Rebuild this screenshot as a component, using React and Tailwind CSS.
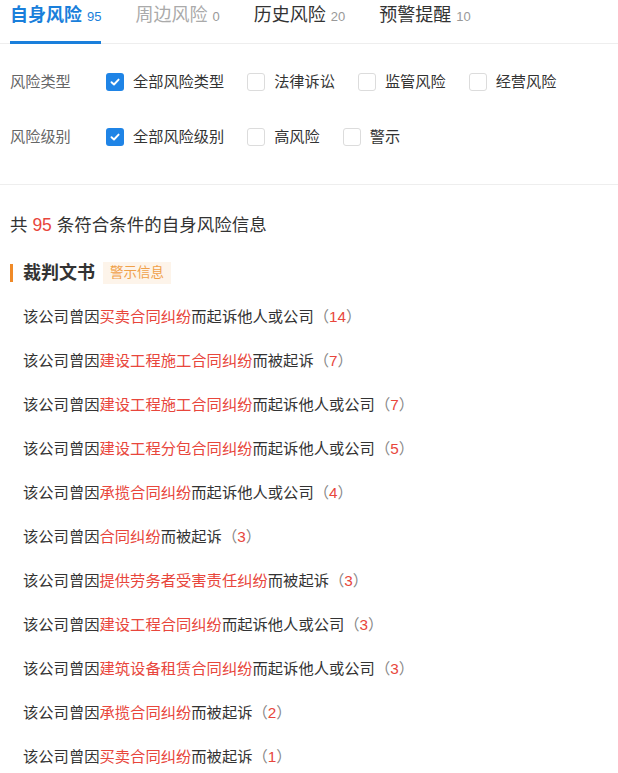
import React from "react";

const FONT = { fontFamily: '"Liberation Sans", "Noto Sans CJK SC", sans-serif' };

function Check({ checked }) {
  if (checked) {
    return (
      <span className="flex h-[18px] w-[18px] items-center justify-center rounded-[3px] bg-[#1f84e6]">
        <svg width="12" height="12" viewBox="0 0 12 12" fill="none">
          <path d="M2.5 6.2 L5 8.5 L9.6 3.6" stroke="#fff" strokeWidth="1.9" strokeLinecap="round" strokeLinejoin="round" />
        </svg>
      </span>
    );
  }
  return <span className="h-[18px] w-[18px] rounded-[3px] border border-[#dcdcdc] bg-white" />;
}

function Option({ label, checked }) {
  return (
    <div className="mr-[23px] flex items-center">
      <Check checked={checked} />
      <span className="ml-[9px] text-[15.2px] leading-[22px] text-[#333]">{label}</span>
    </div>
  );
}

function FilterRow({ title, options }) {
  return (
    <div className="flex h-[36px] items-center">
      <span className="w-[96px] text-[15.2px] leading-[22px] text-[#666]">{title}</span>
      {options.map((o, i) => (
        <Option key={i} label={o} checked={i === 0} />
      ))}
    </div>
  );
}

const items = [
  ["买卖合同纠纷", "而起诉他人或公司", 14],
  ["建设工程施工合同纠纷", "而被起诉", 7],
  ["建设工程施工合同纠纷", "而起诉他人或公司", 7],
  ["建设工程分包合同纠纷", "而起诉他人或公司", 5],
  ["承揽合同纠纷", "而起诉他人或公司", 4],
  ["合同纠纷", "而被起诉", 3],
  ["提供劳务者受害责任纠纷", "而被起诉", 3],
  ["建设工程合同纠纷", "而起诉他人或公司", 3],
  ["建筑设备租赁合同纠纷", "而起诉他人或公司", 3],
  ["承揽合同纠纷", "而被起诉", 2],
  ["买卖合同纠纷", "而被起诉", 1],
];

function Tab({ name, count, active, dim }) {
  return (
    <div className="relative mr-[34px] flex h-full items-start pt-[3px]">
      <span
        className={
          "text-[18px] leading-[24px] " +
          (active ? "font-bold text-[#1a7fdb]" : dim ? "text-[#aaa]" : "text-[#333]")
        }
      >
        {name}
      </span>
      <span className={"ml-[5px] mt-[5px] text-[13px] leading-[18px] " + (active ? "text-[#1a7fdb]" : "text-[#999]")}>
        {count}
      </span>
      {active && <span className="absolute bottom-[-1px] left-0 right-0 h-[3px] bg-[#1a7fdb]" />}
    </div>
  );
}

export default function App() {
  return (
    <div className="w-[618px] bg-white" style={FONT}>
      <div className="flex h-[44px] border-b border-[#eee] px-[10px]">
        <Tab name="自身风险" count="95" active />
        <Tab name="周边风险" count="0" dim />
        <Tab name="历史风险" count="20" />
        <Tab name="预警提醒" count="10" />
      </div>

      <div className="flex flex-col gap-[19px] border-b border-[#eee] px-[10px] pb-[29px] pt-[20px]">
        <FilterRow title="风险类型" options={["全部风险类型", "法律诉讼", "监管风险", "经营风险"]} />
        <FilterRow title="风险级别" options={["全部风险级别", "高风险", "警示"]} />
      </div>

      <div className="px-[10px] pt-[28px]">
        <div className="text-[17.5px] leading-[24px] text-[#333]">
          共 <span className="text-[#e8463c]">95</span> 条符合条件的自身风险信息
        </div>

        <div className="mt-[25px] flex h-[21px] items-center">
          <span className="h-[18px] w-[3px] bg-[#f08a28]" />
          <span className="ml-[10px] text-[18px] font-bold leading-[24px] text-[#333]">裁判文书</span>
          <span className="ml-[8px] flex h-[22px] items-center bg-[#fdf4ea] px-[7px] text-[13.5px] leading-[20px] text-[#f0a048]">
            警示信息
          </span>
        </div>

        <div className="mt-[12px] flex flex-col pl-[13px]">
          {items.map(([red, rest, n], i) => (
            <div key={i} className="flex h-[44px] items-center text-[15.3px] leading-[22px] text-[#333]">
              <span>
                该公司曾因<span className="text-[#e8463c]">{red}</span>
                {rest}
                <span className="text-[#888]">（</span>
                <span className="text-[#e8463c]">{n}</span>
                <span className="text-[#888]">）</span>
              </span>
            </div>
          ))}
        </div>
      </div>
    </div>
  );
}
